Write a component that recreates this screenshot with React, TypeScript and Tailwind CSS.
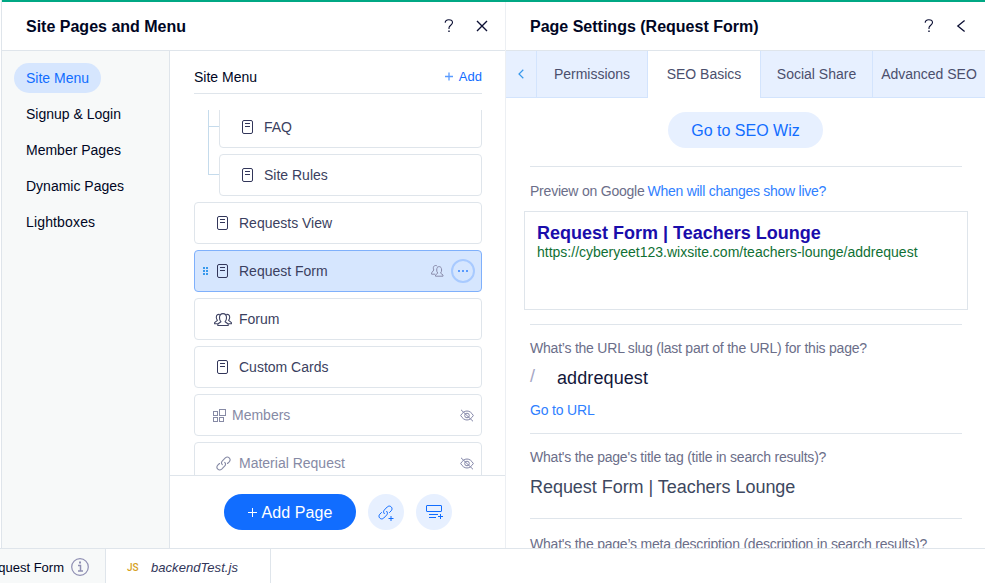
import type { ReactNode } from "react";

const HelpIcon = () => (
  <svg width="12" height="16" viewBox="0 0 12 16" fill="none" stroke="#0b0f33" strokeWidth="1.1">
    <path d="M2.200 4.800C2.200 2.700 3.800 1.700 5.800 1.700s3.700 1 3.700 2.900c0 2.500-3.500 2.700-3.500 5.200v1.100" />
    <path d="M5.300 13.200h1.400" strokeWidth="1.400" />
  </svg>
);

const CloseIcon = () => (
  <svg width="14" height="14" viewBox="0 0 14 14" fill="none" stroke="#0b0f33" strokeWidth="1.400">
    <path d="M2 2l10 10M12 2L2 12" />
  </svg>
);

const BackIcon = () => (
  <svg width="10" height="14" viewBox="0 0 10 14" fill="none" stroke="#0b0f33" strokeWidth="1.3">
    <path d="M8.600 1.500L1.800 7l6.800 5.500" />
  </svg>
);

const PageIcon = () => (
  <svg width="11" height="14" viewBox="0 0 11 14" fill="none" stroke="#32365a">
    <rect x="0.5" y="0.5" width="10" height="13" rx="1.5" />
    <path d="M3 3.5h5M3 6.5h5" />
  </svg>
);

const GroupIcon = () => (
  <svg width="18" height="13" viewBox="0 0 18 13" fill="none" stroke="#3f4363" strokeWidth="1.1" strokeLinejoin="round">
    <path d="M3.800 12.500V11l3.100-2.300c-1-1-1.400-2.300-1.400-4C5.500 2 7 .6 9 .6s3.500 1.400 3.500 4.100c0 1.700-.4 3-1.400 4L14.200 11v1.500z" />
    <path d="M5.800 1.500C4 .9 2.300 2 2.300 4.300c0 1.300.4 2.200 1.100 3L.6 9.700v1h3.100M12.200 1.500c1.800-.6 3.500.5 3.500 2.800 0 1.300-.4 2.200-1.100 3l2.800 2.400v1h-3.100" />
  </svg>
);

const MembersIcon = () => (
  <svg width="13" height="12" viewBox="0 0 13 12" fill="none" stroke="#8a8cab" strokeWidth="1" strokeLinejoin="round">
    <path d="M4.500 11.200V10l2.300-1.900c-.8-.8-1.100-1.800-1.100-3.100C5.700 2.800 6.700 1.600 8.200 1.600s2.400 1.200 2.400 3.400c0 1.300-.3 2.300-1.100 3.100l2.500 1.900v1.200z" />
    <path d="M6.300 1.300C5.600.3 4.300.2 3.300.9 2.100 1.700 2.100 3.500 2.800 5L.6 7.900v1.300h3.700" />
  </svg>
);

const DragIcon = () => (
  <svg width="5" height="8" viewBox="0 0 5 8" fill="#3899ec">
    <path d="M0 0h2v2H0zM3 0h2v2H3zM0 3h2v2H0zM3 3h2v2H3zM0 6h2v2H0zM3 6h2v2H3z" />
  </svg>
);

const WidgetsIcon = () => (
  <svg width="13" height="13" viewBox="0 0 13 13" fill="none" stroke="#868aa5">
    <rect x="0.5" y="2.500" width="4" height="4" />
    <rect x="6.500" y="0.500" width="6" height="6" />
    <rect x="0.500" y="8.500" width="4" height="4" />
    <rect x="6.500" y="8.500" width="4" height="4" />
  </svg>
);

const chain = [
  "M6.300 8.700C5.200 7.500 5.300 6 6.400 4.900l2.900-3c1.200-1.100 2.800-1.100 3.900 0 1.100 1.100 1.100 2.700 0 3.900L11.500 7.500",
  "M8.700 6.300c1.100 1.200 1 2.700-.1 3.800l-2.900 3c-1.200 1.100-2.800 1.100-3.900 0-1.100-1.100-1.100-2.700 0-3.900L3.500 7.500",
];

const LinkIcon = () => (
  <svg width="15" height="15" viewBox="0 0 15 15" fill="none" stroke="#868aa5" strokeWidth="1.100" strokeLinecap="round">
    <path d={chain[0]} />
    <path d={chain[1]} />
  </svg>
);

const HiddenIcon = () => (
  <svg width="14" height="13" viewBox="0 0 14 13" fill="none" stroke="#8386a8">
    <path d="M.7 6.500C2.300 3.700 4.500 2 7 2s4.700 1.700 6.300 4.500C11.700 9.300 9.500 11 7 11S2.300 9.300.7 6.500z" />
    <circle cx="7" cy="6.500" r="2.300" />
    <path d="M1 .8l12 11.500" />
  </svg>
);

const AddLinkIcon = () => (
  <svg width="16" height="16" viewBox="0 0 16 16" fill="none" stroke="#116dff" strokeLinecap="round">
    <path d={chain[0]} />
    <path d={chain[1]} />
    <path d="M10.500 13.500h5M13 11v5" strokeLinecap="butt" />
  </svg>
);

const AddSectionIcon = () => (
  <svg width="18" height="15" viewBox="0 0 18 15" fill="none" stroke="#116dff">
    <rect x="0.500" y="0.500" width="15" height="6" rx="0.500" />
    <path d="M3 9.500h9M3 12.500h7M12 11.500h5M14.500 9v5" />
  </svg>
);

type Item = {
  label: string;
  icon: "page" | "group" | "widgets" | "link";
  child?: boolean;
  selected?: boolean;
  hidden?: boolean;
};

const items: Item[] = [
  { label: "FAQ", icon: "page", child: true },
  { label: "Site Rules", icon: "page", child: true },
  { label: "Requests View", icon: "page" },
  { label: "Request Form", icon: "page", selected: true },
  { label: "Forum", icon: "group" },
  { label: "Custom Cards", icon: "page" },
  { label: "Members", icon: "widgets", hidden: true },
  { label: "Material Request", icon: "link", hidden: true },
];

const icons = {
  page: <PageIcon />,
  group: <GroupIcon />,
  widgets: <WidgetsIcon />,
  link: <LinkIcon />,
};

const iconSlots = {
  page: "ml-[22px] w-[22px]",
  group: "ml-[19px] w-[25px]",
  widgets: "ml-[18px] w-[19px]",
  link: "ml-[21px] w-[23px]",
};

function PageRow({ item }: { item: Item }) {
  const frame = item.selected ? "border-[#7fb0fb] bg-[#d6e6fe]" : "border-[#dfe5eb] bg-white";
  const row = (
    <div className={`flex h-[42px] min-w-0 flex-1 items-center rounded-[4px] border ${frame}`}>
      {item.selected ? (
        <span className="ml-[8px] flex w-[14px] items-center">
          <DragIcon />
        </span>
      ) : null}
      <span className={`flex shrink-0 items-center ${item.selected ? "w-[22px]" : iconSlots[item.icon]}`}>
        {icons[item.icon]}
      </span>
      <span className={`flex-1 ${item.hidden ? "text-[#868aa5]" : "text-[#3b3f60]"}`}>{item.label}</span>
      {item.hidden ? (
        <span className="mr-[7px]">
          <HiddenIcon />
        </span>
      ) : null}
      {item.selected ? (
        <>
          <MembersIcon />
          <span className="mr-[6px] ml-[7px] flex size-6 items-center justify-center gap-[2px] rounded-full border-2 border-[#a8caff]">
            <i className="size-[2px] bg-[#5a9bff]" />
            <i className="size-[2px] bg-[#5a9bff]" />
            <i className="size-[2px] bg-[#5a9bff]" />
          </span>
        </>
      ) : null}
    </div>
  );
  if (!item.child) return <div className="flex">{row}</div>;
  return (
    <div className="flex">
      <div className="-mt-[6px] ml-[14px] h-[27px] w-[11px] shrink-0 border-b border-l border-[#c5dbec]" />
      {row}
    </div>
  );
}

const sections = ["Signup & Login", "Member Pages", "Dynamic Pages", "Lightboxes"];

function PanelHeader({ title, children }: { title: string; children: ReactNode }) {
  return (
    <header className="flex h-[49px] shrink-0 items-center border-b border-[#dfe5eb] pl-6">
      <h2 className="flex-1 pt-[2px] text-[16px] font-bold text-[#000624]">{title}</h2>
      {children}
    </header>
  );
}

function Rule() {
  return <div className="h-px shrink-0 bg-[#dfe5eb]" />;
}

const fieldLabel = "flex items-center whitespace-nowrap tracking-[-0.22px] text-[#6b6e89]";

export default function App() {
  return (
    <div className="flex h-[583px] w-[985px] flex-col overflow-hidden bg-white font-['Liberation_Sans',Arial,sans-serif] text-[14px] leading-5 text-[#000624]">
      <div className="flex h-[548px] shrink-0 pl-px">
        <div className="flex min-w-0 flex-1 border-l border-[#dfe5eb]">
          <div className="flex min-w-0 flex-1 flex-col border-t-2 border-[#00a884]">
            <div className="flex min-h-0 flex-1">
              <section className="flex w-[504px] shrink-0 flex-col border-r border-[#eceff3]">
                <PanelHeader title="Site Pages and Menu">
                  <HelpIcon />
                  <span className="mr-[16px] ml-[20px]">
                    <CloseIcon />
                  </span>
                </PanelHeader>
                <div className="flex min-h-0 flex-1">
                  <nav className="flex w-[168px] shrink-0 flex-col gap-4 border-r border-[#dfe5eb] bg-[#f7f9f9] pt-3 pl-3">
                    <div className="-mb-[5px] flex h-[30px] w-[87px] items-center rounded-full bg-[#d6e6fe] pl-3 text-[#116dff]">Site Menu</div>
                    {sections.map((s) => (
                      <div key={s} className="pl-3 last:tracking-[0.15px]">
                        {s}
                      </div>
                    ))}
                  </nav>
                  <div className="flex min-w-0 flex-1 flex-col">
                    <div className="mx-6 mr-[23px] flex h-[43px] shrink-0 items-center border-b border-[#dfe5eb] pt-[9px]">
                      <span className="flex-1">Site Menu</span>
                      <svg className="mr-[6px]" width="8" height="9" viewBox="0 0 8 9" stroke="#5a9bff" fill="none">
                        <path d="M0 4.500h8M4 .5v8" strokeWidth="1.300" />
                      </svg>
                      <span className="text-[13px] text-[#116dff]">Add</span>
                    </div>
                    <div className="mt-4 mr-[23px] ml-6 min-h-0 flex-1 overflow-hidden">
                      <div className="-mt-1 flex flex-col gap-[6px]">
                        {items.map((item, i) => (
                          <div key={item.label} className={i === 1 ? "-mt-[27px] pt-[27px] [&>div>div:first-child]:-mt-[27px] [&>div>div:first-child]:h-12" : ""}>
                            <PageRow item={item} />
                          </div>
                        ))}
                      </div>
                    </div>
                    <div className="flex h-[73px] shrink-0 items-center justify-center gap-3 border-t border-[#dfe5eb]">
                      <button className="flex h-9 w-[132px] items-center justify-center gap-1 rounded-full bg-[#116dff] pt-[2px] pl-[2px] text-[16px] tracking-[0.1px] text-white">
                        <svg width="9" height="10" viewBox="0 0 9 10" stroke="white">
                          <path d="M0 4.500h9M4.500 0v9" />
                        </svg>
                        Add Page
                      </button>
                      <button className="flex size-9 items-center justify-center rounded-full bg-[#e7f0ff] pt-px">
                        <AddLinkIcon />
                      </button>
                      <button className="flex size-9 items-center justify-center rounded-full bg-[#e7f0ff] pl-[2px]">
                        <AddSectionIcon />
                      </button>
                    </div>
                  </div>
                </div>
              </section>

              <section className="flex min-w-0 flex-1 flex-col">
                <PanelHeader title="Page Settings (Request Form)">
                  <HelpIcon />
                  <span className="mr-[19px] ml-[21px]">
                    <BackIcon />
                  </span>
                </PanelHeader>
                <div className="flex h-[47px] shrink-0 text-[#4b4f6d]">
                  <div className="flex w-[31px] items-center justify-center border-r border-b border-[#d3e4fd] bg-[#e7f0ff]">
                    <svg width="6" height="10" viewBox="0 0 6 10" fill="none" stroke="#3899ec" strokeWidth="1.200">
                      <path d="M5.300.8L1 5l4.300 4.200" />
                    </svg>
                  </div>
                  <div className="flex w-[111px] items-center justify-center border-r border-b border-[#d3e4fd] bg-[#e7f0ff]">Permissions</div>
                  <div className="flex w-[112px] items-center justify-center pb-px">SEO Basics</div>
                  <div className="flex w-[112px] items-center justify-center border-b border-l border-[#d3e4fd] bg-[#e7f0ff]">Social Share</div>
                  <div className="flex flex-1 items-center justify-center border-b border-l border-[#d3e4fd] bg-[#e7f0ff] whitespace-nowrap">Advanced SEO</div>
                </div>
                <div className="flex min-h-0 flex-1 flex-col overflow-hidden pt-[14px] pr-[23px] pl-6">
                  <button className="mr-px flex h-9 w-[155px] shrink-0 items-center justify-center self-center rounded-full bg-[#e7f0ff] pt-[2px] text-[16px] text-[#116dff]">
                    Go to SEO Wiz
                  </button>
                  <div className="h-[18px] shrink-0" />
                  <Rule />
                  <div className={`${fieldLabel} h-11 shrink-0 gap-[3px] pt-[4px]`}>
                    Preview on Google <span className="tracking-[-0.27px] text-[#2f80ff]">When will changes show live?</span>
                  </div>
                  <div className="-mr-[6px] -ml-[6px] h-[99px] shrink-0 border border-[#dfe5eb] pt-[11px] pl-3">
                    <div className="text-[18px] font-bold text-[#1a0dab]">Request Form | Teachers Lounge</div>
                    <div className="-mt-px text-[#0f7034]">https://cyberyeet123.wixsite.com/teachers-lounge/addrequest</div>
                  </div>
                  <div className="h-[14px] shrink-0" />
                  <Rule />
                  <div className={`${fieldLabel} mt-[13px] h-5 shrink-0`}>What’s the URL slug (last part of the URL) for this page?</div>
                  <div className="mt-[10px] flex h-5 shrink-0 items-center text-[18px] tracking-[0.1px] text-[#12173a]">
                    <span className="w-[27px] pb-1 text-[#a5a6c5]">/</span>addrequest
                  </div>
                  <div className="mt-[12px] h-5 shrink-0 tracking-[-0.18px] text-[#2f80ff]">Go to URL</div>
                  <div className="h-[13px] shrink-0" />
                  <Rule />
                  <div className={`${fieldLabel} mt-[13px] h-5 shrink-0`}>What's the page's title tag (title in search results)?</div>
                  <div className="mt-[10px] h-5 shrink-0 text-[18px] tracking-[-0.04px] text-[#3d4860]">Request Form | Teachers Lounge</div>
                  <div className="h-[21px] shrink-0" />
                  <Rule />
                  <div className={`${fieldLabel} mt-[15px] h-5 shrink-0`}>What's the page’s meta description (description in search results)?</div>
                </div>
              </section>
            </div>
          </div>
        </div>
      </div>
      <footer className="flex h-[35px] shrink-0 border-t border-[#dfe5eb] text-[13px]">
        <div className="flex w-[106px] items-center justify-end overflow-hidden border-r border-[#dfe5eb] bg-[#f7f9f9] pt-[3px] pr-4">
          <span className="whitespace-nowrap">Request Form</span>
          <svg className="-mt-px ml-[7px] shrink-0" width="18" height="18" viewBox="0 0 18 18" fill="none" stroke="#8f8fb3">
            <circle cx="9" cy="9" r="8.300" strokeWidth="1.200" />
            <path d="M7 7.500h2.500v5M7 13h5" strokeWidth="1.500" />
            <path d="M8 4.500h2" strokeWidth="2" />
          </svg>
        </div>
        <div className="flex w-[165px] items-center border-r border-[#dfe5eb] pt-[3px] pl-[21px]">
          <span className="w-[24px] font-['Roboto',sans-serif] text-[10px] font-medium text-[#d6a01c]">JS</span>
          <span className="tracking-[0.05px] text-[#32365a] italic">backendTest.js</span>
        </div>
      </footer>
    </div>
  );
}
